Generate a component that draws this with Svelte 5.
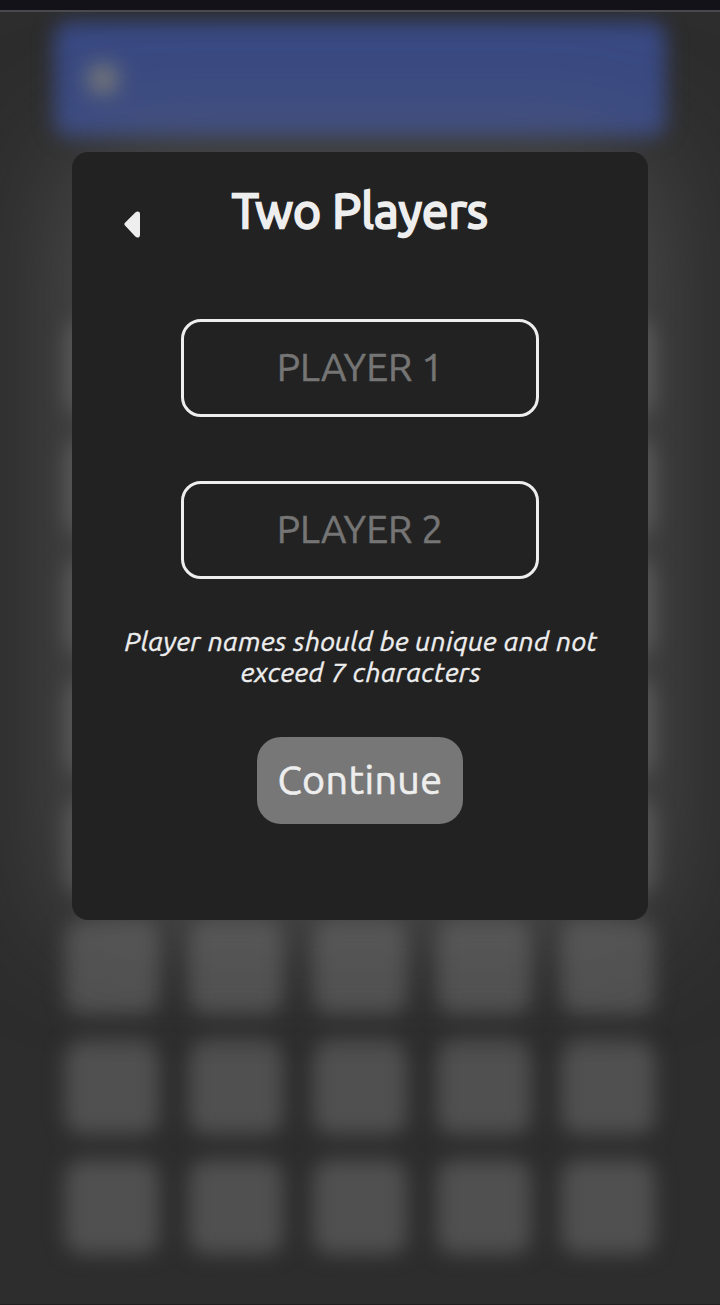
<script>
  const tiles = Array.from({ length: 40 }, (_, i) => i);
  let playerOne = $state('');
  let playerTwo = $state('');
</script>

<div class="screen">
  <div class="browser-edge"></div>
  <div class="stage">
    <div class="game" aria-hidden="true">
      <div class="banner"><span class="menu-dot"></span></div>
      <div class="board">
        {#each tiles as tile (tile)}
          <div class="tile"></div>
        {/each}
      </div>
    </div>

    <div class="overlay">
      <main class="dialog">
        <header>
          <button class="back" aria-label="Back">
            <svg width="17" height="28" viewBox="0 0 17 28">
              <path d="M11.3 1.5 1 11.7Q-.3 13 1 14.6L11.3 25.4Q13.1 27.2 15 26.2Q16 25.6 16 23.7V3Q16 1.2 14.9.7Q13.2-.2 11.3 1.5Z" fill="#eee" />
            </svg>
          </button>
          <h1><span>Two Players</span></h1>
        </header>
        <div class="fields">
          <input placeholder="PLAYER 1" maxlength="7" bind:value={playerOne} />
          <input placeholder="PLAYER 2" maxlength="7" bind:value={playerTwo} />
        </div>
        <p class="hint"><span>Player names should be unique and not</span><br /><span class="second">exceed 7 characters</span></p>
        <button class="continue"><span>Continue</span></button>
      </main>
    </div>
  </div>
</div>

<style>
  :global(body) { margin: 0; background: #2d2d2d; }
  * { box-sizing: border-box; }
  .screen {
    width: 720px;
    height: 1305px;
    overflow: hidden;
    display: flex;
    flex-direction: column;
    font-family: Ubuntu, 'Noto Sans', sans-serif;
    color: #eee;
    background: #2d2d2d;
  }
  .browser-edge { height: 12px; flex: none; background: #131218; border-bottom: 2px solid #4a494e; }
  .stage { position: relative; flex: 1; overflow: hidden; border-bottom: 1px solid #202020; }
  .game { filter: blur(10px); padding: 9px 54px 0; }
  .banner { height: 116px; border-radius: 16px; background: #394982; display: flex; align-items: center; padding-left: 34px; }
  .menu-dot { width: 30px; height: 30px; border-radius: 6px; background: #70747a; }
  .board {
    margin: 183px 11px 0;
    display: grid;
    grid-template-columns: repeat(5, 94px);
    grid-auto-rows: 94px;
    gap: 26px 30px;
  }
  .tile { background: #505050; border-radius: 18px; }
  .overlay { position: absolute; inset: 0; display: flex; justify-content: center; align-items: flex-start; padding-top: 140px; }
  .dialog {
    width: 576px;
    height: 768px;
    border-radius: 16px;
    background: #222;
    box-shadow: 0 0 120px rgba(110, 110, 110, 0.58);
    display: flex;
    flex-direction: column;
    align-items: center;
  }
  header { width: 100%; height: 167px; display: grid; grid-template-columns: 100px 1fr 100px; align-items: start; }
  button { border: 0; padding: 0; font-family: inherit; color: inherit; }
  .back { width: 17px; height: 28px; margin: 59px 0 0 52px; background: none; line-height: 0; }
  h1 { margin: 24px 0 0; text-align: center; font-size: 48px; line-height: 68px; font-weight: 400; letter-spacing: 0.15px; -webkit-text-stroke: 2.4px #eee; white-space: nowrap; }
  .fields { display: flex; flex-direction: column; gap: 64px; }
  input {
    width: 358px;
    height: 98px;
    padding: 0 0 3px;
    border: 3px solid #eee;
    border-radius: 20px;
    background: transparent;
    color: #eee;
    text-align: center;
    font: 400 39px Ubuntu, 'Noto Sans', sans-serif;
    outline: none;
  }
  input::placeholder { color: #757575; opacity: 1; -webkit-text-stroke: 0.5px #757575; }
  .hint { margin: 47px 0 0; padding-left: 2px; text-align: center; font-size: 27px; line-height: 31px; letter-spacing: 0.36px; font-style: italic; -webkit-text-stroke: 0.4px #eee; white-space: nowrap; }
  .continue { width: 206px; height: 87px; margin-top: 49px; padding-bottom: 4px; border-radius: 24px; background: #777; font-size: 39.5px; letter-spacing: 0.4px; -webkit-text-stroke: 0.6px #eee; }
</style>
